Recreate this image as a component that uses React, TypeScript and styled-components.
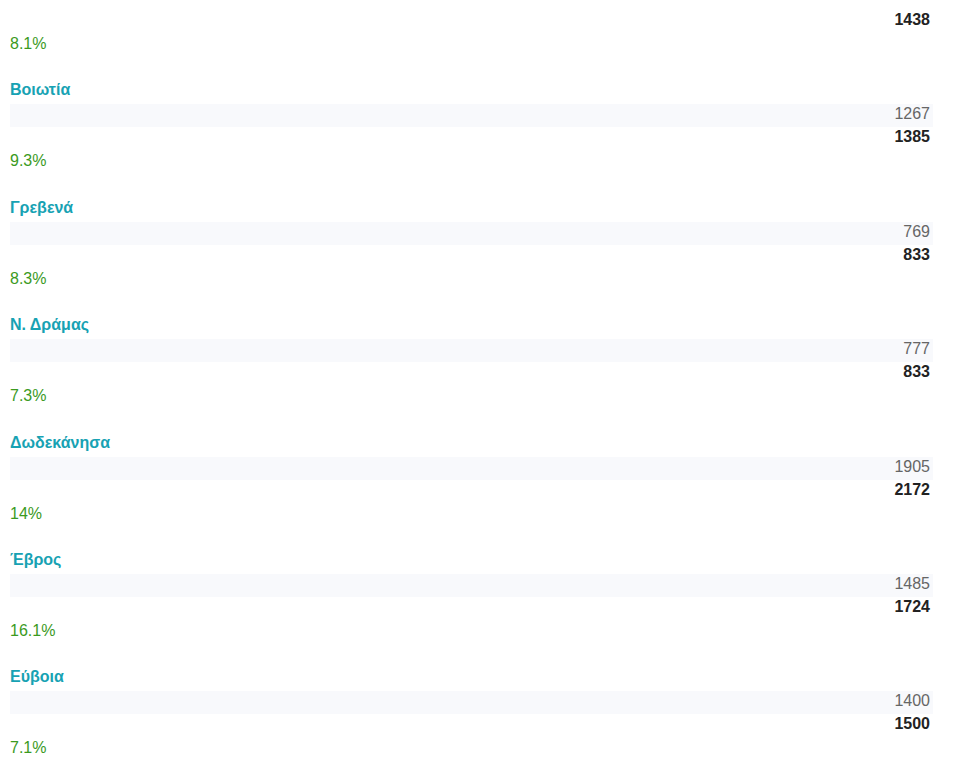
import React from 'react';
import styled, { createGlobalStyle } from 'styled-components';

const GlobalStyle = createGlobalStyle`
    body {
        margin: 0;
        background: #ffffff;
        font-family: "Liberation Sans", Arial, sans-serif;
        font-size: 16px;
    }
`;

const Page = styled.div`
    padding: 10px 27px 0 10px;
`;

const Block = styled.section`
    margin-bottom: 26.4px;
`;

const Name = styled.div`
    color: #17a2b3;
    font-weight: 700;
    line-height: 20px;
    margin-bottom: 4px;
`;

const Previous = styled.div`
    background: #f8f9fc;
    color: #666666;
    line-height: 20px;
    padding: 0 3px 3px 0;
    text-align: right;
`;

const Current = styled.div`
    color: #222222;
    font-weight: 700;
    line-height: 20px;
    text-align: right;
    padding-right: 3px;
    margin-bottom: 4px;
`;

const Change = styled.div`
    color: #3b9a1e;
    line-height: 20px;
`;

type Region = { name?: string; prev?: number; curr: number; change: string };

const regions: Region[] = [
    { curr: 1438, change: '8.1%' },
    { name: 'Βοιωτία', prev: 1267, curr: 1385, change: '9.3%' },
    { name: 'Γρεβενά', prev: 769, curr: 833, change: '8.3%' },
    { name: 'Ν. Δράμας', prev: 777, curr: 833, change: '7.3%' },
    { name: 'Δωδεκάνησα', prev: 1905, curr: 2172, change: '14%' },
    { name: 'Έβρος', prev: 1485, curr: 1724, change: '16.1%' },
    { name: 'Εύβοια', prev: 1400, curr: 1500, change: '7.1%' },
];

const App = () => {
    return (
        <>
            <GlobalStyle />
            <Page>
                {regions.map((r, i) => (
                    <Block key={i}>
                        {r.name && <Name>{r.name}</Name>}
                        {r.prev !== undefined && <Previous>{r.prev}</Previous>}
                        <Current>{r.curr}</Current>
                        <Change>{r.change}</Change>
                    </Block>
                ))}
            </Page>
        </>
    );
};

export default App;
